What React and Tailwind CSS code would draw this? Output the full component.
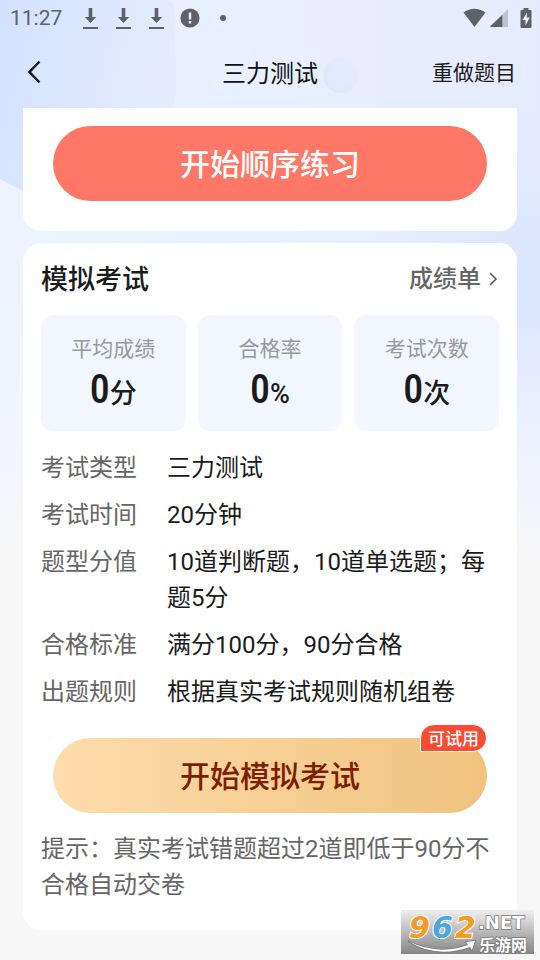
import React from 'react';

const stats = [
  { label: '平均成绩', value: '0', unit: '分' },
  { label: '合格率', value: '0', unit: '%' },
  { label: '考试次数', value: '0', unit: '次' },
];

const details = [
  { label: '考试类型', value: '三力测试' },
  { label: '考试时间', value: '20分钟' },
  { label: '题型分值', value: '10道判断题，10道单选题；每题5分' },
  { label: '合格标准', value: '满分100分，90分合格' },
  { label: '出题规则', value: '根据真实考试规则随机组卷' },
];

function Backdrop() {
  return (
    <svg
      className="absolute inset-0 -z-10 h-full w-full"
      viewBox="0 0 540 960"
      preserveAspectRatio="none"
      aria-hidden="true"
    >
      <defs>
        <linearGradient id="sky" x1="0" y1="0" x2="1" y2="0">
          <stop offset="0" stopColor="#eef3ff" />
          <stop offset="0.5" stopColor="#e8efff" />
          <stop offset="1" stopColor="#e6ecff" />
        </linearGradient>
        <radialGradient id="glow">
          <stop offset="0" stopColor="#d9e4ff" />
          <stop offset="1" stopColor="#d9e4ff" stopOpacity="0" />
        </radialGradient>
        <linearGradient id="panel" x1="0" y1="0" x2="1" y2="0.3">
          <stop offset="0" stopColor="#d3e0ff" />
          <stop offset="1" stopColor="#e5ecff" />
        </linearGradient>
        <linearGradient id="bubble" x1="0" y1="1" x2="1" y2="0">
          <stop offset="0" stopColor="#dbe6ff" />
          <stop offset="1" stopColor="#e8eeff" />
        </linearGradient>
        <linearGradient id="fade" x1="0" y1="0" x2="0" y2="1">
          <stop offset="0" stopColor="#f7f7f7" stopOpacity="0" />
          <stop offset="0.6" stopColor="#f5f7fc" stopOpacity="0.6" />
          <stop offset="1" stopColor="#f7f7f7" />
        </linearGradient>
      </defs>
      <rect width="540" height="960" fill="url(#sky)" />
      <ellipse cx="545" cy="300" rx="170" ry="190" fill="url(#glow)" />
      <path d="M0 0H165Q175 0 175 10V191H23L0 179Z" fill="url(#panel)" />
      <circle cx="341" cy="75" r="18" fill="url(#bubble)" />
      <rect y="290" width="540" height="270" fill="url(#fade)" />
      <rect y="559" width="540" height="401" fill="#f7f7f7" />
    </svg>
  );
}

function DownloadIcon() {
  return (
    <svg className="h-6 w-[15px]" viewBox="0 0 15 24" fill="#5f6166" aria-hidden="true">
      <path d="M5.700 2h3.600v9h3.900l-5.700 6-5.700-6h3.900z" />
      <path d="M0 21h15v2H0z" />
    </svg>
  );
}

function StatusBar() {
  return (
    <div className="flex h-9 items-center justify-between pr-2 pl-[10px] text-[#5f6166]">
      <div className="flex items-center">
        <span className="w-[73px] pt-[2px] text-[21px]">11:27</span>
        <div className="flex items-center gap-[18px]">
          <DownloadIcon />
          <DownloadIcon />
          <DownloadIcon />
        </div>
        <svg className="ml-4 h-5 w-5" viewBox="0 0 20 20" aria-hidden="true">
          <circle cx="10" cy="10" r="9.600" fill="#5f6166" />
          <path d="M8.800 4.500h2.400v7H8.800zM8.800 13h2.400v2.400H8.800z" fill="#e8eeff" />
        </svg>
        <span className="ml-5 h-[6px] w-[6px] rounded-full bg-[#5f6166]" />
      </div>
      <div className="flex items-center">
        <svg className="h-5 w-[23px]" viewBox="0 0 23 20" fill="#5f6166" aria-hidden="true">
          <path d="M0.500 4.500Q11.500-3 22.500 4.500L11.500 19z" />
        </svg>
        <svg className="ml-[3px] h-5 w-[19px]" viewBox="0 0 19 20" aria-hidden="true">
          <path d="M19 1V19H13V7z" fill="#bfc3cc" />
          <path d="M13.300 6.700V19H0.500z" fill="#5f6166" />
        </svg>
        <svg className="ml-3 h-5 w-3" viewBox="0 0 12 20" aria-hidden="true">
          <path d="M3.500 0h5v2H10.500q1 0 1 1V19q0 1-1 1H1.500q-1 0-1-1V3q0-1 1-1h2z" fill="#5f6166" />
          <path d="M7 4.500 2.500 12H5.500V17.500L9.700 9.500H6.700z" fill="#e8eeff" />
        </svg>
      </div>
    </div>
  );
}

function Header() {
  return (
    <header className="grid h-[72px] grid-cols-[1fr_auto_1fr] items-center px-6">
      <button type="button" aria-label="返回" className="justify-self-start">
        <svg className="h-6 w-5" viewBox="0 0 20 24" fill="none" stroke="#151515" strokeWidth="2.500" aria-hidden="true">
          <path d="M15.500 1.500 5.500 12l10 10.500" />
        </svg>
      </button>
      <h1 className="pt-[3px] text-2xl text-[#111]">三力测试</h1>
      <button type="button" className="justify-self-end pt-[3px] text-[21px] text-[#1b1b1b]">
        重做题目
      </button>
    </header>
  );
}

function Stat({ label, value, unit }) {
  return (
    <div className="flex h-[116px] flex-col items-center rounded-xl bg-[#f2f7ff] pt-[18px]">
      <span className="text-[21px] leading-8 text-[#97999d]">{label}</span>
      <div className="flex items-baseline font-medium text-[#1b1b1b]">
        <span className="font-['Roboto_Condensed','Roboto',sans-serif] text-[40px] leading-[50px]">{value}</span>
        <span className="text-[27px] leading-9">{unit}</span>
      </div>
    </div>
  );
}

function Watermark() {
  return (
    <svg
      className="absolute right-[6px] bottom-[6px] h-[44px] w-[133px]"
      viewBox="0 0 133 44"
      role="img"
      aria-label="962.NET 乐游网"
    >
      <defs>
        <linearGradient id="plate" x1="0" y1="0" x2="0" y2="1">
          <stop offset="0" stopColor="#efefef" />
          <stop offset="0.4" stopColor="#c4c4c4" />
          <stop offset="1" stopColor="#858585" />
        </linearGradient>
      </defs>
      <rect width="133" height="44" fill="url(#plate)" />
      <g
        fontFamily="DejaVu Sans, sans-serif"
        fontWeight="700"
        fontStyle="italic"
        fontSize="30"
        stroke="#fff"
        strokeWidth="2"
        paintOrder="stroke"
      >
        <text x="8" y="28" fill="#f59a23">9</text>
        <text x="31" y="28" fill="#4aa8e0">6</text>
        <text x="54" y="28" fill="#f59a23">2</text>
      </g>
      <g fill="#fff" stroke="#777" strokeWidth="1.500" paintOrder="stroke" fontWeight="700">
        <text x="77" y="19" fontFamily="DejaVu Sans, sans-serif" fontSize="18">.NET</text>
        <text x="78" y="41" fontFamily="Noto Sans CJK SC, sans-serif" fontSize="16">乐游网</text>
        <path d="M7 31Q37 46 67 35L65 32 74 31 71 40 69 37Q35 49 7 31Z" />
      </g>
    </svg>
  );
}

export default function App() {
  return (
    <div className="relative isolate min-h-screen overflow-hidden pb-[30px] font-['Roboto','Noto_Sans_CJK_SC',sans-serif]">
      <Backdrop />
      <StatusBar />
      <Header />

      <main className="flex flex-col gap-3 px-[23px]">
        <section className="rounded-b-[18px] bg-white px-[30px] pt-[18px] pb-[30px]">
          <button
            type="button"
            className="h-[75px] w-full rounded-full bg-[#ff7867] pt-[2px] text-[30px] font-medium text-white"
          >
            开始顺序练习
          </button>
        </section>

        <section className="rounded-[18px] bg-white px-[18px] pt-4 pb-[27px]">
          <div className="flex h-10 items-center justify-between">
            <h2 className="pt-[2px] text-[27px] font-medium text-[#1b1b1b]">模拟考试</h2>
            <a href="#scores" className="flex items-center gap-1 text-2xl font-medium text-[#666]">
              成绩单
              <svg className="h-4 w-[14px]" viewBox="0 0 14 16" fill="none" stroke="#555" strokeWidth="1.500" aria-hidden="true">
                <path d="M5 2l6 6-6 6" />
              </svg>
            </a>
          </div>

          <div className="mt-4 grid grid-cols-3 gap-3">
            {stats.map((s) => (
              <Stat key={s.label} {...s} />
            ))}
          </div>

          <dl className="mt-[19px] flex flex-col gap-[11px] text-2xl leading-9">
            {details.map((d) => (
              <div key={d.label} className="flex">
                <dt className="w-[126px] shrink-0 text-[#666]">{d.label}</dt>
                <dd className="text-[#1b1b1b]">{d.value}</dd>
              </div>
            ))}
          </dl>

          <div className="relative mt-7 px-3">
            <button
              type="button"
              className="h-[75px] w-full rounded-full bg-linear-to-r from-[#ffdcae] to-[#f0c27c] pt-[2px] text-[30px] font-medium text-[#7b1f00]"
            >
              开始模拟考试
            </button>
            <span className="absolute -top-[14px] right-3 flex h-7 items-center rounded-full rounded-bl-none border border-white bg-[#fd4a33] px-[7px] pt-[3px] text-[17px] font-medium text-white">
              可试用
            </span>
          </div>

          <p className="mt-[18px] text-2xl leading-9 text-[#666]">
            提示：真实考试错题超过2道即低于90分不合格自动交卷
          </p>
        </section>
      </main>

      <Watermark />
    </div>
  );
}
